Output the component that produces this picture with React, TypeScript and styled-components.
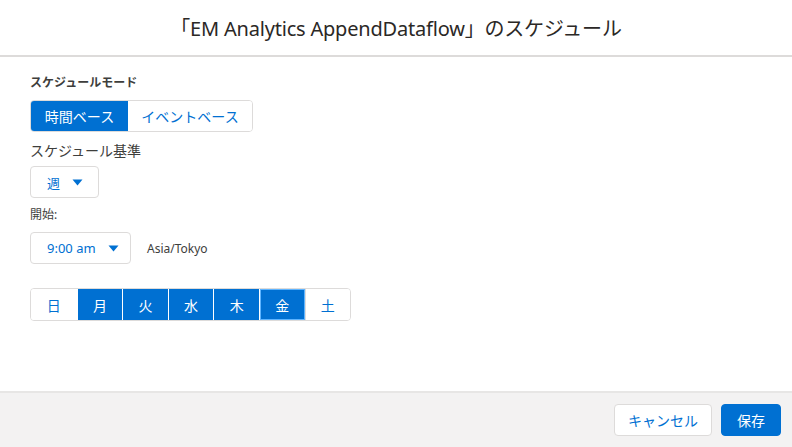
import React from 'react';
import styled, {createGlobalStyle} from 'styled-components';

const GlobalStyle = createGlobalStyle`
  html, body, #root {
    height: 100%;
    margin: 0;
  }
  body {
    font-family: "Noto Sans", "Noto Sans CJK JP", sans-serif;
    color: #080707;
    background: #ffffff;
  }
`;

const days = ['日', '月', '火', '水', '木', '金', '土'];
const selectedDays = ['月', '火', '水', '木', '金'];

function Caret() {
    return (
        <svg width="11" height="7" viewBox="0 0 11 7">
            <path d="M0.5 0.5 L10.5 0.5 L5.5 6.5 Z" fill="#0070d2"/>
        </svg>
    );
}

export default function App() {
    return (
        <>
            <GlobalStyle/>
            <Modal>
                <Header>
                    <Title>「EM Analytics AppendDataflow」のスケジュール</Title>
                </Header>
                <Body>
                    <Label $bold $bottom={8}>スケジュールモード</Label>
                    <Group>
                        <GroupButton $active $width={97}>時間ベース</GroupButton>
                        <GroupButton $width={124}>イベントベース</GroupButton>
                    </Group>
                    <Label $size={14} $top={9} $bottom={5}>スケジュール基準</Label>
                    <Select $width={69}>週<Caret/></Select>
                    <Label $top={8} $bottom={8}>開始:</Label>
                    <Row>
                        <Select $width={101}>9:00 am<Caret/></Select>
                        <Zone>Asia/Tokyo</Zone>
                    </Row>
                    <Days>
                        {days.map((d) => (
                            <DayButton
                                key={d}
                                $active={selectedDays.includes(d)}
                                $focus={d === '金'}
                            >
                                {d}
                            </DayButton>
                        ))}
                    </Days>
                </Body>
                <Footer>
                    <NeutralButton>キャンセル</NeutralButton>
                    <BrandButton>保存</BrandButton>
                </Footer>
            </Modal>
        </>
    );
}

const Modal = styled.div`
  display: flex;
  flex-direction: column;
  height: 100%;
`;

const Header = styled.header`
  height: 55px;
  display: flex;
  align-items: center;
  justify-content: center;
  border-bottom: 2px solid #dddbda;
`;

const Title = styled.h2`
  margin: 0;
  font-size: 20px;
  font-weight: 400;
  color: #2b2826;
  letter-spacing: -0.2px;
`;

const Body = styled.main`
  flex: 1;
  display: flex;
  flex-direction: column;
  align-items: flex-start;
  padding: 17px 30px 0;
`;

const Label = styled.div<{ $bold?: boolean; $size?: number; $top?: number; $bottom: number }>`
  font-size: ${(p) => p.$size ?? 12}px;
  line-height: ${(p) => (p.$size ?? 12) + 6}px;
  font-weight: ${(p) => (p.$bold ? 700 : 400)};
  color: #3e3e3c;
  margin-top: ${(p) => p.$top ?? 0}px;
  margin-bottom: ${(p) => p.$bottom}px;
`;

const Group = styled.div`
  display: flex;
  border: 1px solid #dddbda;
  border-radius: 4px;
  overflow: hidden;
`;

const GroupButton = styled.div<{ $active?: boolean; $width: number }>`
  width: ${(p) => p.$width}px;
  height: 30px;
  display: flex;
  align-items: center;
  justify-content: center;
  font-size: 14px;
  color: ${(p) => (p.$active ? '#ffffff' : '#0070d2')};
  background: ${(p) => (p.$active ? '#0070d2' : '#ffffff')};
`;

const Select = styled.div<{ $width: number }>`
  box-sizing: border-box;
  width: ${(p) => p.$width}px;
  height: 32px;
  border: 1px solid #dddbda;
  border-radius: 4px;
  display: flex;
  align-items: center;
  gap: 12px;
  padding-left: 16px;
  font-size: 13px;
  color: #0070d2;
`;

const Row = styled.div`
  display: flex;
  align-items: center;
  gap: 16px;
`;

const Zone = styled.span`
  font-size: 12px;
  color: #3e3e3c;
`;

const Days = styled.div`
  display: flex;
  margin-top: 24px;
  border: 1px solid #dddbda;
  border-radius: 4px;
  overflow: hidden;
`;

const DayButton = styled.div<{ $active?: boolean; $focus?: boolean }>`
  box-sizing: border-box;
  width: 45.6px;
  height: 31px;
  display: flex;
  align-items: center;
  justify-content: center;
  font-size: 14px;
  color: ${(p) => (p.$active ? '#ffffff' : '#0070d2')};
  background: ${(p) => (p.$active ? '#0070d2' : '#ffffff')};
  border-left: 1px solid ${(p) => (p.$active ? '#ffffff' : '#dddbda')};
  box-shadow: ${(p) => (p.$focus ? 'inset 0 0 0 1px #5eb4ff' : 'none')};

  &:first-child {
    border-left: none;
  }
`;

const Footer = styled.footer`
  height: 54px;
  display: flex;
  align-items: center;
  justify-content: flex-end;
  gap: 9px;
  padding-right: 11px;
  background: #f3f2f2;
  border-top: 2px solid #e7e6e5;
`;

const NeutralButton = styled.button`
  height: 32px;
  width: 98px;
  border: 1px solid #dddbda;
  border-radius: 4px;
  background: #ffffff;
  color: #0070d2;
  font-family: inherit;
  font-size: 14px;
`;

const BrandButton = styled.button`
  height: 32px;
  width: 60px;
  border: 1px solid #0070d2;
  border-radius: 4px;
  background: #0070d2;
  color: #ffffff;
  font-family: inherit;
  font-size: 14px;
`;
